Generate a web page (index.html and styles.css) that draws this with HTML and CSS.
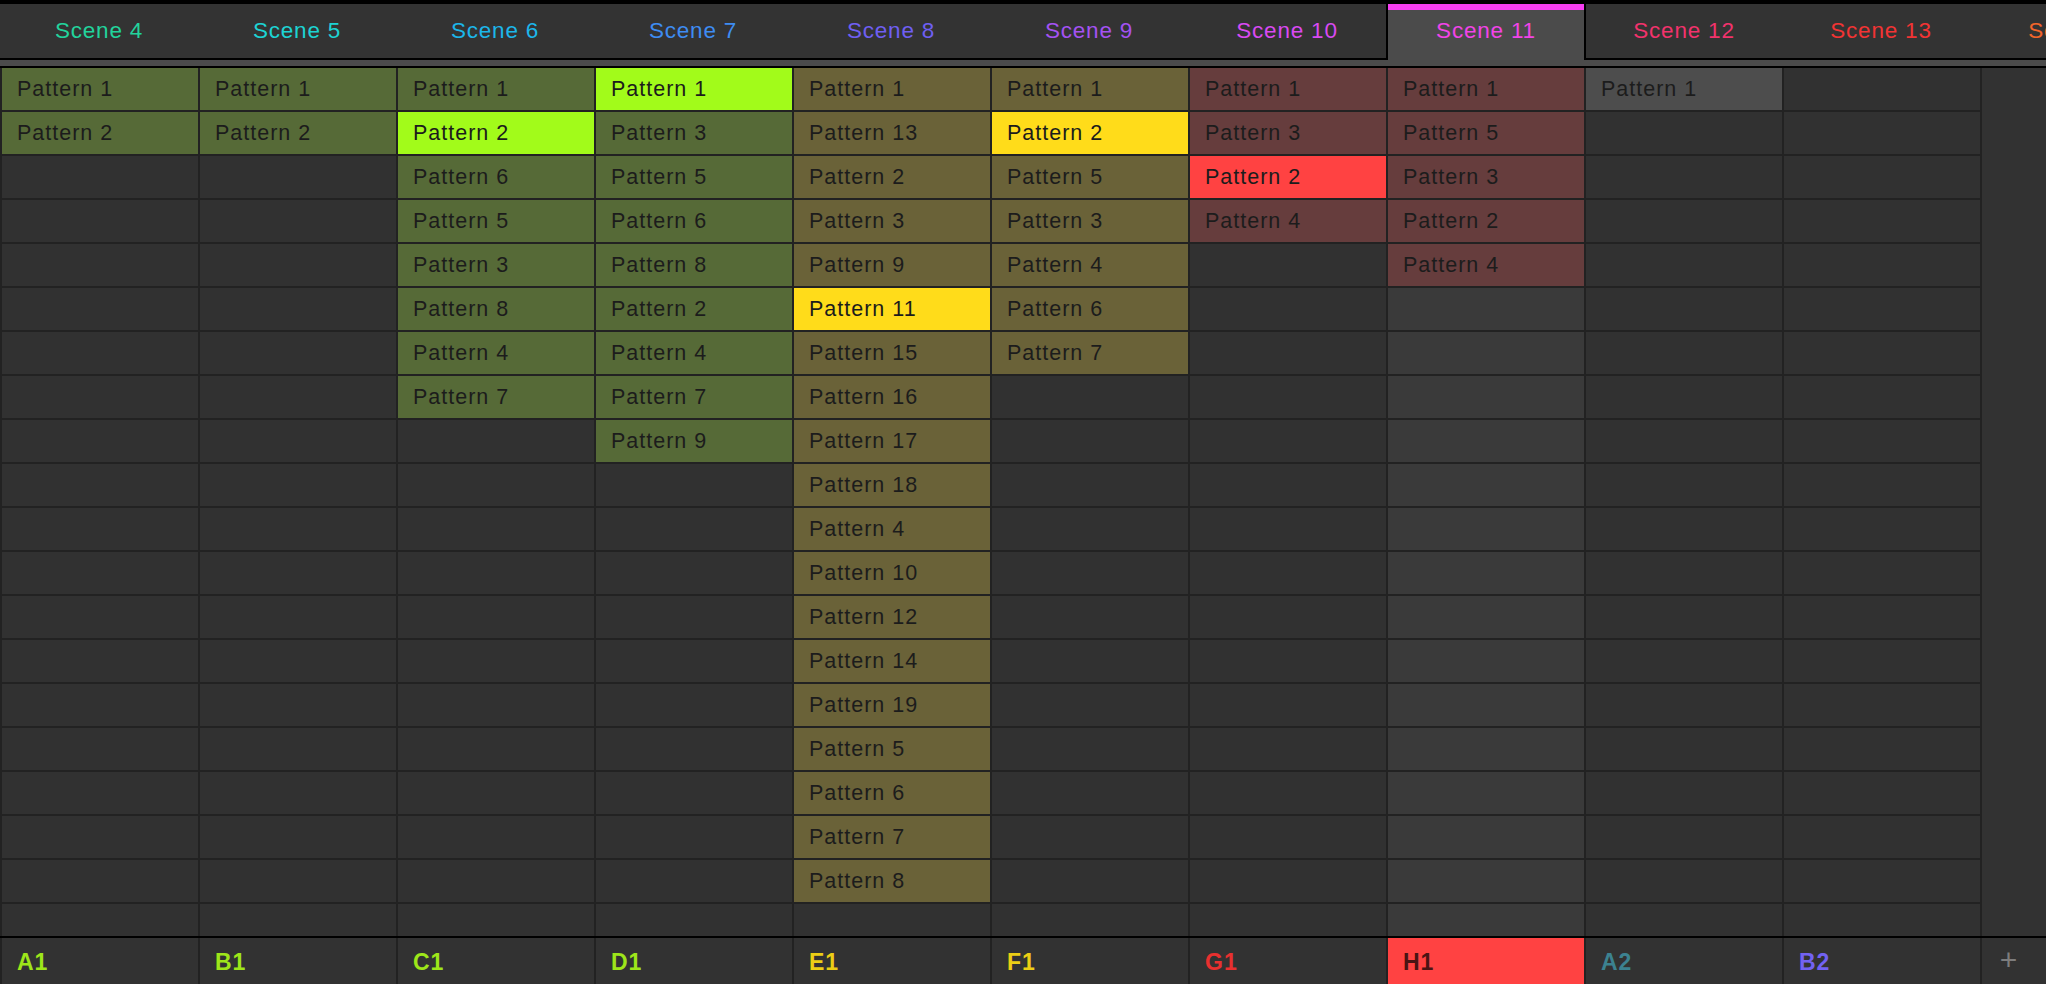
FILE: index.html
```html
<!DOCTYPE html>
<html lang="en">
<head>
    <meta charset="UTF-8">
    <title>Arranger - Ideas</title>
    <link rel="stylesheet" href="styles.css">
</head>
<body>
    <div class="app">
        <!-- Scene tabs -->
        <div class="scenes">
            <div class="tab" style="color: #22d39c">Scene 4</div>
            <div class="tab" style="color: #1dd3d3">Scene 5</div>
            <div class="tab" style="color: #1cb6ea">Scene 6</div>
            <div class="tab" style="color: #3e8cf2">Scene 7</div>
            <div class="tab" style="color: #6f5ff2">Scene 8</div>
            <div class="tab" style="color: #a452f2">Scene 9</div>
            <div class="tab prev" style="color: #d94af2">Scene 10</div>
            <div class="tab active" style="color: #f244e8">Scene 11</div>
            <div class="tab next" style="color: #f2326c">Scene 12</div>
            <div class="tab" style="color: #f23434">Scene 13</div>
            <div class="tab" style="color: #f2652a">Scene 14</div>
        </div>

        <!-- Pattern slots, one column per group -->
        <div class="board" id="board"></div>

        <!-- Group strip -->
        <div class="groups">
            <div class="group lime">A1</div>
            <div class="group lime">B1</div>
            <div class="group lime">C1</div>
            <div class="group lime">D1</div>
            <div class="group yellow">E1</div>
            <div class="group yellow">F1</div>
            <div class="group red">G1</div>
            <div class="group current">H1</div>
            <div class="group teal">A2</div>
            <div class="group violet">B2</div>
            <div class="group add">+</div>
        </div>
    </div>

    <script>
        const columns = [
            { tone: 'green', patterns: [1, 2], active: -1 },
            { tone: 'green', patterns: [1, 2], active: -1 },
            { tone: 'green', patterns: [1, 2, 6, 5, 3, 8, 4, 7], active: 1 },
            { tone: 'green', patterns: [1, 3, 5, 6, 8, 2, 4, 7, 9], active: 0 },
            { tone: 'olive', patterns: [1, 13, 2, 3, 9, 11, 15, 16, 17, 18, 4, 10, 12, 14, 19, 5, 6, 7, 8], active: 5 },
            { tone: 'olive', patterns: [1, 2, 5, 3, 4, 6, 7], active: 1 },
            { tone: 'maroon', patterns: [1, 3, 2, 4], active: 2 },
            { tone: 'maroon', patterns: [1, 5, 3, 2, 4], active: -1, current: true },
            { tone: 'grey', patterns: [1], active: -1 },
            { tone: 'grey', patterns: [], active: -1 }
        ];

        const board = document.getElementById('board');

        columns.forEach(column => {
            const col = document.createElement('div');
            col.className = 'col' + (column.current ? ' current' : '');

            for (let i = 0; i < 20; i++) {
                const cell = document.createElement('div');
                cell.className = 'cell';
                if (i < column.patterns.length) {
                    cell.classList.add(column.tone);
                    if (i === column.active) cell.classList.add('on');
                    cell.textContent = 'Pattern ' + column.patterns[i];
                }
                col.appendChild(cell);
            }
            board.appendChild(col);
        });

        const spare = document.createElement('div');
        spare.className = 'spare';
        board.appendChild(spare);
    </script>
</body>
</html>
```

FILE: styles.css
```css
body {
    margin: 0;
    background-color: #000;
    font-family: "Liberation Sans", Arial, sans-serif;
    overflow: hidden;
}

.app {
    width: 2046px;
    height: 984px;
    display: flex;
    flex-direction: column;
    overflow: hidden;
}

/* scene tabs */
.scenes {
    margin-top: 4px;
    height: 62px;
    display: flex;
    align-items: flex-start;
    background-color: #4b4b4b;
    border-bottom: 2px solid #000;
    overflow: hidden;
    flex: none;
}

.tab {
    flex: none;
    width: 198px;
    height: 56px;
    box-sizing: border-box;
    background-color: #333;
    border-bottom: 2px solid #000;
    line-height: 54px;
    text-align: center;
    font-size: 22.5px;
    letter-spacing: 0.8px;
}

.tab.prev {
    width: 200px;
    border-right: 2px solid #000;
}

.tab.active {
    width: 196px;
    height: 62px;
    background-color: #4b4b4b;
    border-top: 6px solid #f53ef0;
    border-bottom: none;
    line-height: 42px;
}

.tab.next {
    border-left: 2px solid #000;
}

/* pattern grid */
.board {
    height: 868px;
    display: flex;
    gap: 2px;
    padding-left: 2px;
    background-color: #222;
    overflow: hidden;
    flex: none;
}

.col {
    flex: none;
    width: 196px;
    display: flex;
    flex-direction: column;
    gap: 2px;
}

.cell {
    flex: none;
    height: 42px;
    line-height: 42px;
    padding-left: 15px;
    background-color: #313131;
    color: #1c1c1c;
    font-size: 21.5px;
    letter-spacing: 1px;
    white-space: nowrap;
}

.col.current .cell {
    background-color: #3a3a3a;
}

.col .cell.green { background-color: #566a37; }
.col .cell.green.on { background-color: #a2fb1a; }
.col .cell.olive { background-color: #6a6238; }
.col .cell.olive.on { background-color: #ffdc1a; }
.col .cell.maroon { background-color: #663d3d; }
.col .cell.maroon.on { background-color: #ff4242; }
.col .cell.grey { background-color: #4d4d4d; }

.spare {
    flex: 1;
    background-color: #323232;
}

/* group strip */
.groups {
    border-top: 2px solid #000;
    height: 46px;
    display: flex;
    gap: 2px;
    padding-left: 2px;
    background-color: #222;
    flex: none;
}

.group {
    flex: none;
    width: 196px;
    box-sizing: border-box;
    padding-left: 15px;
    background-color: #323232;
    line-height: 48px;
    font-size: 23px;
    font-weight: bold;
    letter-spacing: 1px;
}

.group.lime { color: #9ee61a; }
.group.yellow { color: #ecce15; }
.group.red { color: #e8302f; }
.group.teal { color: #3c8290; }
.group.violet { color: #7262f2; }

.group.current {
    background-color: #ff4242;
    color: #4a1414;
}

.group.add {
    flex: 1;
    padding: 0 10px 0 0;
    text-align: center;
    color: #7d7d7d;
    font-weight: normal;
    font-size: 30px;
    line-height: 44px;
}
```
